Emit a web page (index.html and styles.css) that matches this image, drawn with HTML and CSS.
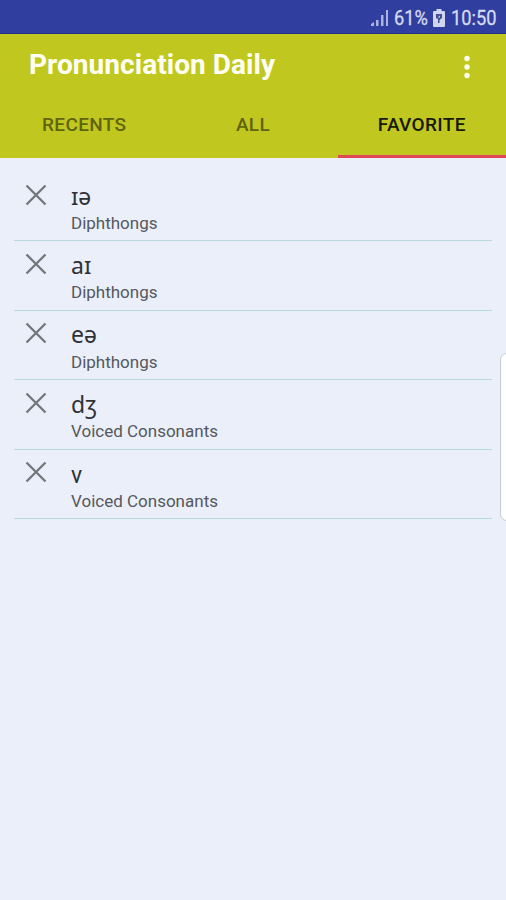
FILE: index.html
```html
<!DOCTYPE html>
<html lang="en">
<head>
<meta charset="utf-8">
<title>Pronunciation Daily</title>
<link rel="stylesheet" href="styles.css">
</head>
<body>
<div class="status">
  <svg class="signal" width="18" height="18" viewBox="0 0 18 18"><path d="M0 15l3-2v4H0zM5 11h2.500v6H5zM10 6h2.500v11H10zM15 1h2v16h-2z"/></svg>
  <span class="percent"><span class="condensed">61%</span></span>
  <svg class="battery" width="12" height="18" viewBox="0 0 12 18"><path class="case" d="M3.500 0h5v2H11q1 0 1 1v14q0 1-1 1H1q-1 0-1-1V3q0-1 1-1h2.500z"/><path class="mark" d="M3 5h6v4L6.500 11v3H5v-4L3 9z"/><path class="case" d="M4.500 8.500L7 6.500v2z"/></svg>
  <span class="clock"><span class="condensed">10:50</span></span>
</div>
<header class="header">
  <div class="toolbar">
    <h1>Pronunciation Daily</h1>
    <svg class="more" width="8" height="24" viewBox="0 0 8 24"><circle cx="4" cy="3.500" r="2.700"/><circle cx="4" cy="12" r="2.700"/><circle cx="4" cy="20.500" r="2.700"/></svg>
  </div>
  <nav class="tabs">
    <div class="tab recents"><span>RECENTS</span></div>
    <div class="tab all"><span>ALL</span></div>
    <div class="tab favorite"><span>FAVORITE</span></div>
  </nav>
</header>
<ul class="list">
  <li><svg class="remove" width="22" height="22" viewBox="0 0 22 22"><path d="M1.500 1.500l19 19M20.500 1.500l-19 19"/></svg><div><div class="sound">ɪə</div><div class="kind">Diphthongs</div></div></li>
  <li><svg class="remove" width="22" height="22" viewBox="0 0 22 22"><path d="M1.500 1.500l19 19M20.500 1.500l-19 19"/></svg><div><div class="sound">aɪ</div><div class="kind">Diphthongs</div></div></li>
  <li><svg class="remove" width="22" height="22" viewBox="0 0 22 22"><path d="M1.500 1.500l19 19M20.500 1.500l-19 19"/></svg><div><div class="sound">eə</div><div class="kind">Diphthongs</div></div></li>
  <li><svg class="remove" width="22" height="22" viewBox="0 0 22 22"><path d="M1.500 1.500l19 19M20.500 1.500l-19 19"/></svg><div><div class="sound">dʒ</div><div class="kind">Voiced Consonants</div></div></li>
  <li><svg class="remove" width="22" height="22" viewBox="0 0 22 22"><path d="M1.500 1.500l19 19M20.500 1.500l-19 19"/></svg><div><div class="sound plain">v</div><div class="kind">Voiced Consonants</div></div></li>
</ul>
<div class="edge-handle"></div>
</body>
</html>
```
FILE: styles.css
```css
* { box-sizing: border-box; }
body {
  position: relative;
  margin: 0;
  height: 900px;
  overflow: hidden;
  background: #ebeff9;
  font-family: Roboto, "Noto Sans", sans-serif;
}
.status {
  display: flex;
  height: 34px;
  padding: 9px 9px 0 0;
  justify-content: flex-end;
  background: #303f9f;
  border-bottom: 1px solid #25308c;
  color: #d5daf1;
  font-size: 21px;
  line-height: 19px;
}
.signal { flex: none; margin-right: 5px; fill: #aab3e0; }
.percent { width: 34px; margin-right: 5px; }
.clock { width: 46px; margin-left: 6px; }
.condensed {
  display: inline-block;
  transform: scaleX(.87);
  transform-origin: left;
  -webkit-text-stroke: .3px;
}
.battery { flex: none; }
.case { fill: #d0d6f2; }
.mark { fill: #42508f; }
.header { height: 124px; background: #c0c820; }
.toolbar {
  display: flex;
  height: 60px;
  padding: 0 35px 0 29px;
  justify-content: space-between;
}
h1 {
  margin: 15px 0 0;
  color: #fffff4;
  font-size: 28px;
  line-height: 32px;
  font-weight: 700;
  letter-spacing: .05px;
  white-space: nowrap;
}
.more { margin-top: 21px; fill: #fffff0; }
.tabs { display: grid; grid-template-columns: 168.500px 169px 1fr; height: 64px; }
.tab {
  padding-top: 19px;
  color: #60640f;
  font-size: 19px;
  line-height: 24px;
  font-weight: 500;
  letter-spacing: .35px;
  text-align: center;
}
.favorite { color: #17180a; border-bottom: 3px solid #e04858; }
.list {
  margin: 0;
  padding: 14px 14px 0;
  list-style: none;
}
.list li {
  display: flex;
  height: 69.400px;
  padding: 11.500px 0 0 11px;
  border-bottom: 1.500px solid #b9d9e0;
}
.remove {
  margin-right: 24px;
  fill: none;
  stroke: #737679;
  stroke-width: 2.300px;
}
.sound {
  height: 27.500px;
  color: #303236;
  font-family: "Noto Sans", sans-serif;
  font-size: 23px;
  line-height: 25px;
}
.plain { font-family: Roboto, sans-serif; line-height: 29px; }
.kind { color: #55585e; font-size: 17px; line-height: 24px; }
.edge-handle {
  position: absolute;
  top: 353px;
  right: -10px;
  width: 16px;
  height: 168px;
  border: 1px solid #c8cacd;
  border-radius: 7px;
  background: #fff;
}
```
